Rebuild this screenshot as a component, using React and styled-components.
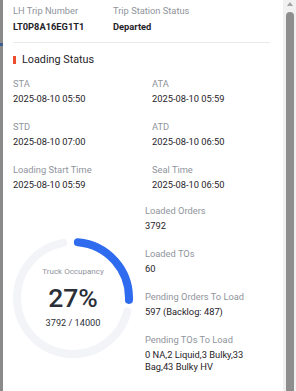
import React from "react";
import styled, { createGlobalStyle } from "styled-components";

const GlobalStyle = createGlobalStyle`
  html, body {
    margin: 0;
    padding: 0;
    height: 100%;
    overflow: hidden;
    background: #8a8a8a;
  }
  * {
    box-sizing: border-box;
  }
`;

const Page = styled.div`
  display: flex;
  height: 391px;
  width: 296px;
  background: #8a8a8a;
  font-family: Roboto, "Liberation Sans", sans-serif;
`;

const Backdrop = styled.div`
  width: 3px;
  display: flex;
  flex-direction: column;
`;

const BackdropMark = styled.div`
  height: 3px;
  margin-top: 43px;
  background: #3d5f91;
`;

const Panel = styled.div`
  flex: 1;
  background: #fff;
  padding: 5px 13px 0 10px;
  overflow: hidden;
`;

const Header = styled.div`
  display: grid;
  grid-template-columns: 100px 1fr;
`;

const Label = styled.div`
  font-size: ${({ small }) => (small ? "9px" : "9.3px")};
  line-height: 12px;
  color: #8f949c;
  white-space: nowrap;
`;

const Value = styled.div`
  font-size: 9.3px;
  line-height: 12px;
  margin-top: ${({ gap }) => gap || "3px"};
  color: #1f2329;
  font-weight: ${({ bold }) => (bold ? 700 : 400)};
`;

const Divider = styled.div`
  height: 1px;
  background: #e9eaec;
  margin-top: 9.5px;
`;

const SectionTitle = styled.div`
  display: flex;
  align-items: center;
  margin-top: 9.5px;
  height: 14px;
  font-size: 10.8px;
  color: #1f2329;
`;

const TitleBar = styled.span`
  width: 3px;
  height: 8px;
  background: #ee4d2d;
  margin-right: 6px;
`;

const TimeGrid = styled.div`
  display: grid;
  grid-template-columns: 139px 1fr;
  row-gap: 16px;
  margin-top: 11px;
`;

const Bottom = styled.div`
  display: flex;
  margin-top: 14px;
`;

const GaugeColumn = styled.div`
  width: 132px;
  flex-shrink: 0;
  padding-top: 33px;
`;

const Gauge = styled.div`
  display: grid;
  width: 120px;
  height: 120px;
  & > * {
    grid-area: 1 / 1;
  }
`;

const GaugeCenter = styled.div`
  display: flex;
  flex-direction: column;
  align-items: center;
  justify-content: center;
`;

const GaugeCaption = styled.div`
  font-size: 8px;
  line-height: 10px;
  color: #8f949c;
`;

const GaugePercent = styled.div`
  font-size: 26.5px;
  line-height: 32px;
  margin-top: 5.5px;
  color: #2b2f38;
  font-weight: 500;
`;

const GaugeRatio = styled.div`
  font-size: 9.2px;
  line-height: 12px;
  margin-top: 2.5px;
  color: #2b2f38;
`;

const Stats = styled.div`
  flex: 1;
  display: flex;
  flex-direction: column;
  gap: 15.5px;
`;

const Scrollbar = styled.div`
  width: 13px;
  background: #f1f1f1;
  display: flex;
  flex-direction: column;
  align-items: center;
`;

const ScrollArrow = styled.div`
  width: 0;
  height: 0;
  margin-top: 2px;
  border-left: 3.5px solid transparent;
  border-right: 3.5px solid transparent;
  border-bottom: 4px solid #a3a3a3;
`;

const ScrollThumb = styled.div`
  flex: 1;
  width: 8px;
  margin-top: 6px;
  background: #8e8e8e;
  border-radius: 4px 4px 0 0;
`;

const polar = (deg, r) => {
  const a = ((deg - 90) * Math.PI) / 180;
  return [60 + r * Math.cos(a), 60 + r * Math.sin(a)];
};

const arc = (from, to, r = 56) => {
  const [x1, y1] = polar(from, r);
  const [x2, y2] = polar(to, r);
  const large = to - from > 180 ? 1 : 0;
  return `M ${x1} ${y1} A ${r} ${r} 0 ${large} 1 ${x2} ${y2}`;
};

const times = [
  ["STA", "2025-08-10 05:50"],
  ["ATA", "2025-08-10 05:59"],
  ["STD", "2025-08-10 07:00"],
  ["ATD", "2025-08-10 06:50"],
  ["Loading Start Time", "2025-08-10 05:59"],
  ["Seal Time", "2025-08-10 06:50"],
];

const stats = [
  ["Loaded Orders", "3792"],
  ["Loaded TOs", "60"],
  ["Pending Orders To Load", "597 (Backlog: 487)"],
  ["Pending TOs To Load", "0 NA,2 Liquid,3 Bulky,33 Bag,43 Bulky HV"],
];

const Field = ({ label, value, gap }) => (
  <div>
    <Label>{label}</Label>
    <Value gap={gap}>{value}</Value>
  </div>
);

export default function App() {
  return (
    <Page>
      <GlobalStyle />
      <Backdrop>
        <BackdropMark />
      </Backdrop>
      <Panel>
        <Header>
          <div>
            <Label>LH Trip Number</Label>
            <Value bold gap="3.5px">LT0P8A16EG1T1</Value>
          </div>
          <div>
            <Label>Trip Station Status</Label>
            <Value bold gap="3.5px">Departed</Value>
          </div>
        </Header>
        <Divider />
        <SectionTitle>
          <TitleBar />
          Loading Status
        </SectionTitle>
        <TimeGrid>
          {times.map(([l, v]) => (
            <Field key={l} label={l} value={v} />
          ))}
        </TimeGrid>
        <Bottom>
          <GaugeColumn>
            <Gauge>
              <svg width="120" height="120" viewBox="0 0 120 120">
                <path
                  d={arc(104, 350)}
                  fill="none"
                  stroke="#f2f4f8"
                  strokeWidth="8"
                  strokeLinecap="round"
                />
                <path
                  d={arc(5, 92)}
                  fill="none"
                  stroke="#2f6bef"
                  strokeWidth="8"
                  strokeLinecap="round"
                />
              </svg>
              <GaugeCenter>
                <GaugeCaption>Truck Occupancy</GaugeCaption>
                <GaugePercent>27%</GaugePercent>
                <GaugeRatio>3792 / 14000</GaugeRatio>
              </GaugeCenter>
            </Gauge>
          </GaugeColumn>
          <Stats>
            {stats.map(([l, v]) => (
              <Field key={l} label={l} value={v} gap="3.5px" />
            ))}
          </Stats>
        </Bottom>
      </Panel>
      <Scrollbar>
        <ScrollArrow />
        <ScrollThumb />
      </Scrollbar>
    </Page>
  );
}
